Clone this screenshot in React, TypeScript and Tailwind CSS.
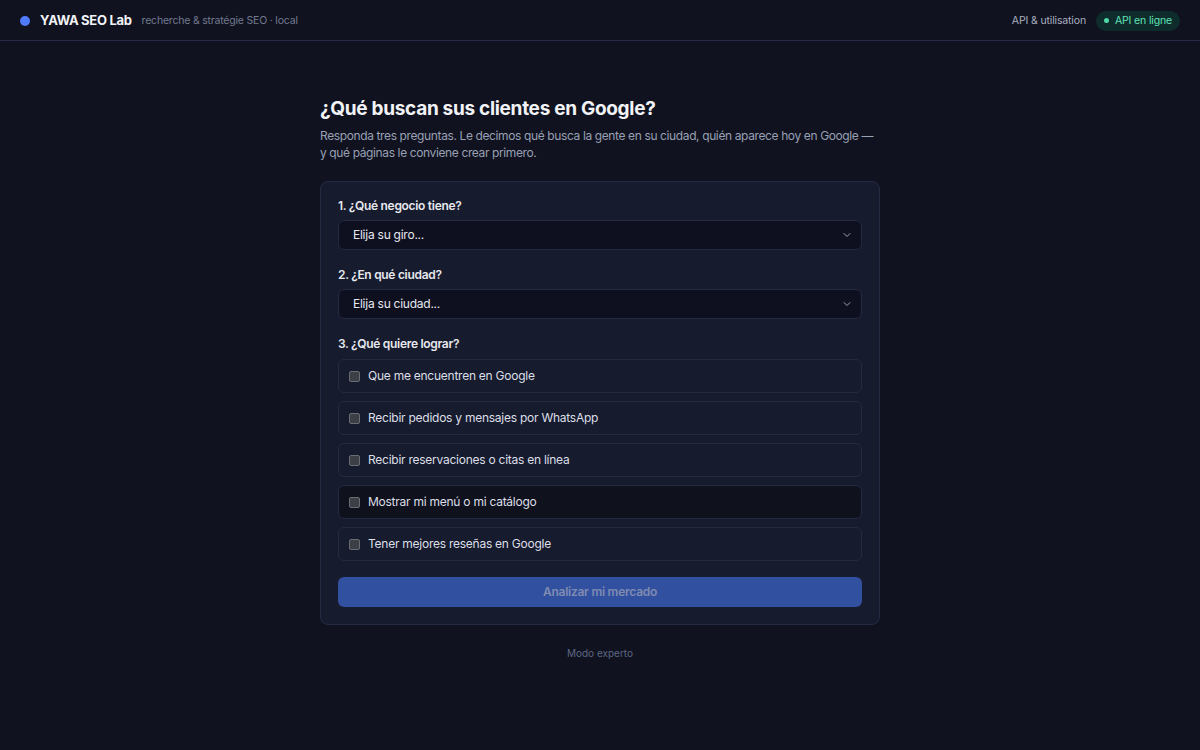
import { ChevronDown } from "lucide-react";

const goals = [
  "Que me encuentren en Google",
  "Recibir pedidos y mensajes por WhatsApp",
  "Recibir reservaciones o citas en línea",
  "Mostrar mi menú o mi catálogo",
  "Tener mejores reseñas en Google",
];

function Select({ placeholder }: { placeholder: string }) {
  return (
    <div className="h-[30px] flex items-center justify-between rounded-md border border-[#242a40] bg-[#0e1020] pl-[14px] pr-[8px] text-[12px] tracking-[-0.25px] text-[#e6e8ee]">
      <span>{placeholder}</span>
      <ChevronDown className="h-3 w-3 text-[#9aa0b4]" strokeWidth={2} />
    </div>
  );
}

export default function App() {
  return (
    <div className="min-h-screen bg-[#10121f] font-['Inter',sans-serif] text-[#e6e8ee]">
      <header className="h-[41px] flex items-center justify-between px-5 pt-[1px] border-b border-[#272a48]">
        <div className="flex items-center">
          <span className="h-[10px] w-[10px] rounded-full bg-[#4f7bff]"></span>
          <span className="ml-[10px] text-[13px] font-bold text-[#f2f3f7] tracking-[-0.3px]">YAWA SEO Lab</span>
          <span className="ml-[10px] text-[10.5px] tracking-[-0.2px] text-[#737a90]">recherche &amp; stratégie SEO · local</span>
        </div>
        <div className="flex items-center gap-[10px]">
          <span className="text-[10.5px] tracking-[-0.15px] text-[#aab0c0]">API &amp; utilisation</span>
          <span className="flex items-center gap-[6px] h-[20px] px-[8px] rounded-full bg-[#0f2c2c] text-[10.5px] tracking-[-0.15px] text-[#5ee2b6]">
            <span className="h-[5px] w-[5px] rounded-full bg-[#4fd8a8]"></span>
            API en ligne
          </span>
        </div>
      </header>

      <main className="w-[560px] mx-auto pt-[54px]">
        <h1 className="text-[19px] font-bold text-[#f2f3f7] leading-[28px] tracking-[-0.3px]">¿Qué buscan sus clientes en Google?</h1>
        <p className="mt-[4px] text-[12px] leading-[17px] tracking-[-0.38px] text-[#98a0b4]">
          Responda tres preguntas. Le decimos qué busca la gente en su ciudad, quién aparece hoy en Google — y qué páginas le conviene crear primero.
        </p>

        <div className="mt-[20px] rounded-lg border border-[#252b42] bg-[#161b2d] px-[17px] pt-[16px] pb-[17px]">
          <div className="text-[12px] font-semibold leading-[16px] tracking-[-0.3px] text-[#e6e8ee]">1. ¿Qué negocio tiene?</div>
          <div className="mt-[6px]">
            <Select placeholder="Elija su giro..." />
          </div>

          <div className="mt-[17px] text-[12px] font-semibold leading-[16px] tracking-[-0.3px] text-[#e6e8ee]">2. ¿En qué ciudad?</div>
          <div className="mt-[6px]">
            <Select placeholder="Elija su ciudad..." />
          </div>

          <div className="mt-[17px] text-[12px] font-semibold leading-[16px] tracking-[-0.3px] text-[#e6e8ee]">3. ¿Qué quiere lograr?</div>
          <div className="mt-[7px] flex flex-col gap-[8px]">
            {goals.map((g, i) => (
              <label
                key={g}
                className={
                  "h-[34px] flex items-center gap-[8px] rounded-md border border-[#242a40] px-[10px] text-[12px] tracking-[-0.25px] text-[#dcdfe7] " +
                  (i === 3 ? "bg-[#0f111d]" : "bg-[#161b2d]")
                }
              >
                <span className="h-[11px] w-[11px] rounded-[2px] border border-[#6a6c73] bg-[#3d3f46]"></span>
                {g}
              </label>
            ))}
          </div>

          <button className="mt-[16px] h-[30px] w-full rounded-md bg-[#3250a0] text-[12px] tracking-[-0.25px] font-semibold text-[#7f8bb0]">
            Analizar mi mercado
          </button>
        </div>

        <div className="mt-[21px] text-center text-[10px] text-[#5c6783]">Modo experto</div>
      </main>
    </div>
  );
}
